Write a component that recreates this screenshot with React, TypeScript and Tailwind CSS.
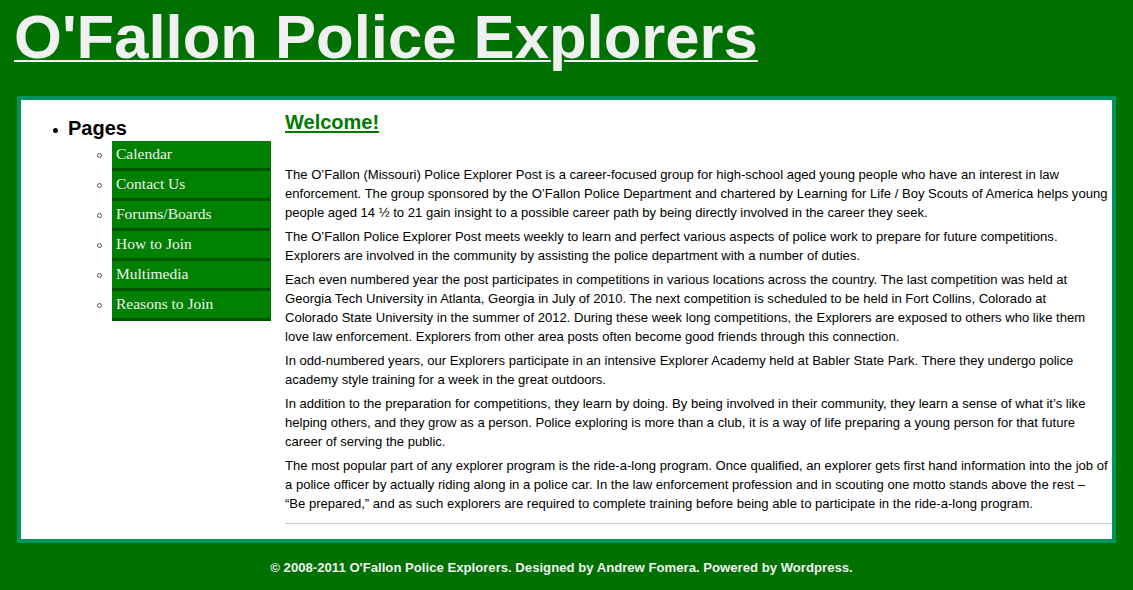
const pages = [
  "Calendar",
  "Contact Us",
  "Forums/Boards",
  "How to Join",
  "Multimedia",
  "Reasons to Join",
];

// lines kept as in the original layout
const paragraphs = [
  [
    "The O’Fallon (Missouri) Police Explorer Post is a career-focused group for high-school aged young people who have an interest in law",
    "enforcement. The group sponsored by the O’Fallon Police Department and chartered by Learning for Life / Boy Scouts of America helps young",
    "people aged 14 ½ to 21 gain insight to a possible career path by being directly involved in the career they seek.",
  ],
  [
    "The O’Fallon Police Explorer Post meets weekly to learn and perfect various aspects of police work to prepare for future competitions.",
    "Explorers are involved in the community by assisting the police department with a number of duties.",
  ],
  [
    "Each even numbered year the post participates in competitions in various locations across the country. The last competition was held at",
    "Georgia Tech University in Atlanta, Georgia in July of 2010. The next competition is scheduled to be held in Fort Collins, Colorado at",
    "Colorado State University in the summer of 2012. During these week long competitions, the Explorers are exposed to others who like them",
    "love law enforcement. Explorers from other area posts often become good friends through this connection.",
  ],
  [
    "In odd-numbered years, our Explorers participate in an intensive Explorer Academy held at Babler State Park. There they undergo police",
    "academy style training for a week in the great outdoors.",
  ],
  [
    "In addition to the preparation for competitions, they learn by doing. By being involved in their community, they learn a sense of what it’s like",
    "helping others, and they grow as a person. Police exploring is more than a club, it is a way of life preparing a young person for that future",
    "career of serving the public.",
  ],
  [
    "The most popular part of any explorer program is the ride-a-long program. Once qualified, an explorer gets first hand information into the job of",
    "a police officer by actually riding along in a police car. In the law enforcement profession and in scouting one motto stands above the rest –",
    "“Be prepared,” and as such explorers are required to complete training before being able to participate in the ride-a-long program.",
  ],
];

const Sidebar = () => {
  return (
    <aside className="w-[250px] shrink-0 pt-[17px]">
      <div className="mb-px flex items-center">
        <span className="ml-[32px] mr-[10px] mt-[3px] h-[5px] w-[5px] rounded-full bg-black" />
        <h2 className="text-[20px] font-bold leading-[23px] text-black">Pages</h2>
      </div>
      <ul className="flex flex-col">
        {pages.map((page) => (
          <li key={page} className="flex items-start">
            <span className="ml-[76px] mr-[10px] mt-[12px] h-[5px] w-[5px] rounded-full border border-[#555]" />
            <a
              href="#"
              className="block h-[30px] w-[159px] border-b-[3px] border-[#005500] bg-[#008000] pl-[4px] font-['Liberation_Serif'] text-[15.5px] leading-[25px] text-[#f2f2f2]"
            >
              {page}
            </a>
          </li>
        ))}
      </ul>
    </aside>
  );
};

export default function App() {
  return (
    <div className="min-h-[590px] bg-[#007000] font-['Liberation_Sans',Arial,sans-serif]">
      <header className="pl-[14px] pt-[1px]">
        <h1 className="text-[61.6px] font-bold leading-[71px] text-[#f0f0f0] underline decoration-[1.5px] underline-offset-[2px]">
          O'Fallon Police Explorers
        </h1>
      </header>

      <main className="mx-[17px] mt-[24px] flex border-4 border-[#00955f] bg-white">
        <Sidebar />
        <section className="ml-[14px] min-w-0 flex-1 overflow-hidden pt-[11px] pb-[15px]">
          <h2 className="text-[20px] font-bold leading-[23px] text-[#007a00] underline underline-offset-[2px]">
            Welcome!
          </h2>
          <div className="mt-[31px] flex flex-col gap-[5px] text-[13.07px] leading-[19px] text-black">
            {paragraphs.map((lines, i) => (
              <p key={i} className="whitespace-nowrap">
                {lines.map((line, j) => (
                  <span key={j}>
                    {line}
                    {j < lines.length - 1 && <br />}
                  </span>
                ))}
              </p>
            ))}
          </div>
          <hr className="mt-[10px] border-t border-[#cccccc]" />
        </section>
      </main>

      <footer className="pr-[10px] pt-[15px] text-center text-[13.15px] font-bold text-[#f0f0f0]">
        © 2008-2011 O'Fallon Police Explorers. Designed by Andrew Fomera. Powered by Wordpress.
      </footer>
    </div>
  );
}
